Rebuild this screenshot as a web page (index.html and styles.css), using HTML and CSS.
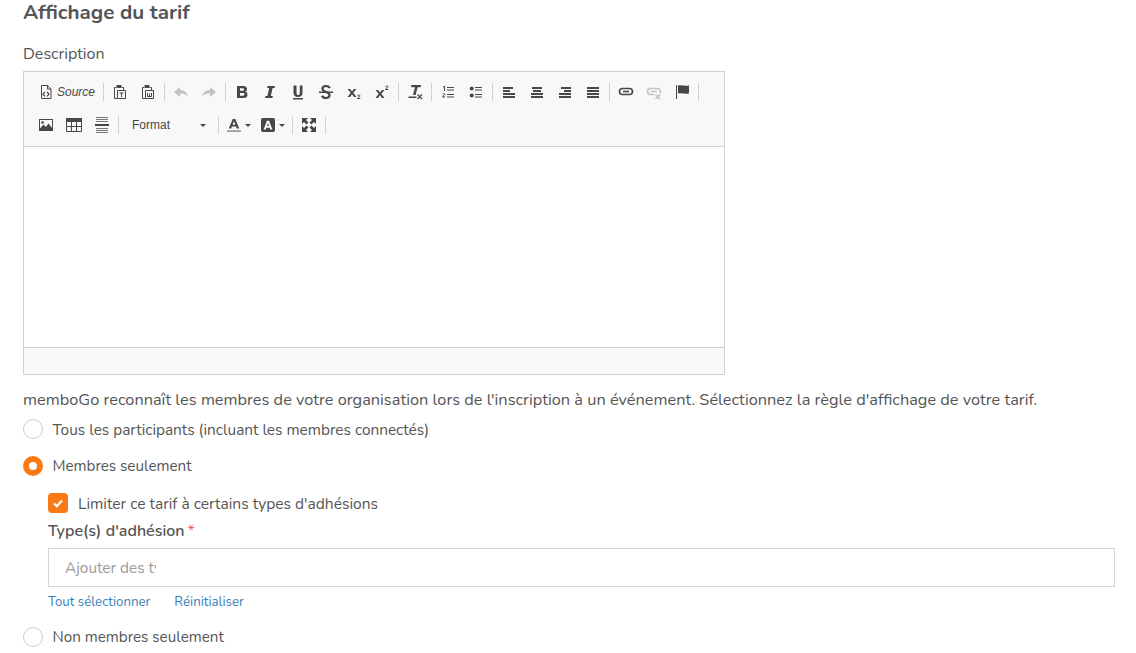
FILE: index.html
```html
<!DOCTYPE html>
<html lang="fr">
<head>
<meta charset="utf-8">
<title>Affichage du tarif</title>
<link rel="stylesheet" href="styles.css">
</head>
<body>
<main class="page">
  <h2 class="title">Affichage du tarif</h2>
  <div class="field-label">Description</div>
  <div class="editor">
    <div class="toolbar">
      <div class="row">
        <span class="btn btn-source">
          <svg class="ico" viewBox="0 0 16 16"><path class="ln" d="M3.500 1.500h6l3.500 3.500v9.500H3.500z"/><path class="ln" d="M9.500 1.500v3.500H13"/><path class="ln-s" d="M7 8l-2 2.200 2 2.200M9 8l2 2.200-2 2.200"/></svg>
          <span class="source-text">Source</span>
        </span>
        <i class="sep"></i>
        <span class="btn"><svg class="ico" viewBox="0 0 16 16"><path class="ln" d="M4 3.500H2.500v11H5M10 3.500h1.500V6"/><path class="fl" d="M4.500 1h5v3h-5z"/><path class="ln" d="M5.500 6.500h8v8h-8z"/><path class="ln" d="M7.500 9h4M9.500 9v4"/></svg></span>
        <span class="btn"><svg class="ico" viewBox="0 0 16 16"><path class="ln" d="M4 3.500H2.500v11H5M10 3.500h1.500V6"/><path class="fl" d="M4.500 1h5v3h-5z"/><path class="ln" d="M5.500 6.500h8v8h-8z"/><path class="ln" d="M7.500 9v3.500h4V9M9.500 9.500V12"/></svg></span>
        <i class="sep"></i>
        <span class="btn off"><svg class="ico" viewBox="0 0 16 16"><path class="fl" d="M1 8l6-5v3c4 0 7 2 8 7-2-3-4-3.500-8-3.500V13z"/></svg></span>
        <span class="btn off"><svg class="ico" viewBox="0 0 16 16"><path class="fl" d="M15 8L9 3v3c-4 0-7 2-8 7 2-3 4-3.500 8-3.500V13z"/></svg></span>
        <i class="sep"></i>
        <span class="btn"><svg class="ico" viewBox="0 0 16 16"><path class="fl" fill-rule="evenodd" d="M3 2h6c3 0 4 1.500 4 3.200 0 1.200-.6 2.200-1.800 2.600C12.800 8.200 13.500 9.300 13.500 10.700 13.500 13 12 14 9.500 14H3zM6 4.300v2.500h2.500c1 0 1.500-.5 1.500-1.300s-.5-1.200-1.500-1.200zM6 9v2.700h3c1 0 1.500-.5 1.500-1.400S10 9 9 9z"/></svg></span>
        <span class="btn"><svg class="ico" viewBox="0 0 16 16"><path class="fl" d="M5.500 2h7.500l-.4 2h-2L8.800 12h2l-.4 2H3l.4-2h2L7.200 4h-2z"/></svg></span>
        <span class="btn"><svg class="ico" viewBox="0 0 16 16"><path class="fl" d="M3 14h10v1.500H3zM3.500 1.500h3v7.200c0 1.700.6 2.300 1.600 2.300s1.700-.6 1.700-2.300V1.500h2.700v7.300c0 3-1.800 4.200-4.500 4.200S3.500 11.800 3.500 8.800z"/></svg></span>
        <span class="btn"><svg class="ico" viewBox="0 0 16 16"><path class="ln-b" d="M12 4c-1-1.500-2.500-2-4-2-2 0-3.500 1-3.500 2.800C4.500 9 11.500 7 11.500 11c0 1.800-1.500 3-3.500 3-1.800 0-3.200-.7-4.200-2.200"/><path class="fl" d="M1 7.500h14V9H1z"/></svg></span>
        <span class="btn"><svg class="ico" viewBox="0 0 16 16"><path class="fl" d="M1.500 5h2.600L6 7.500 7.900 5h2.600L7.300 8.800 10.500 13H7.900L6 10.300 4.100 13H1.500l3.200-4.200z"/><path class="ln-t2" d="M11.500 11.500c.3-.7 2.500-.7 2.500.4 0 1-2.500 1.300-2.500 2.600h2.800"/></svg></span>
        <span class="btn"><svg class="ico" viewBox="0 0 16 16"><path class="fl" d="M1.500 6h2.600L6 8.500 7.900 6h2.600L7.300 9.800 10.500 14H7.900L6 11.300 4.100 14H1.500l3.200-4.200z"/><path class="ln-t2" d="M11.500 2.500c.3-.7 2.500-.7 2.500.4 0 1-2.500 1.300-2.500 2.600h2.800"/></svg></span>
        <i class="sep"></i>
        <span class="btn"><svg class="ico" viewBox="0 0 16 16"><path class="fl" d="M4 1h10l-.4 2.200h-3L8.600 11h-2.600l2-7.800H4.500zM1.500 12.500h8V14h-8z"/><path class="ln-s" d="M10.500 10.500l4.500 4.500M15 10.500L10.500 15"/></svg></span>
        <i class="sep"></i>
        <span class="btn"><svg class="ico" viewBox="0 0 16 16"><path class="ln-t2" d="M3 3l1.500-.8V7M2.500 10c.3-.7 2.300-.7 2.300.4 0 1-2.300 1.300-2.300 2.600h2.600M7 3.500h7M7 6h7M7 10.500h7M7 13h7"/></svg></span>
        <span class="btn"><svg class="ico" viewBox="0 0 16 16"><circle class="fl" cx="3.700" cy="4.500" r="2"/><circle class="fl" cx="3.700" cy="11.500" r="2"/><path class="ln-t2" d="M7 3.500h7M7 6h7M7 10.500h7M7 13h7"/></svg></span>
        <i class="sep"></i>
        <span class="btn"><svg class="ico" viewBox="0 0 16 16"><path class="fl" d="M2 3h10v2H2zM2 6h7v2H2zM2 9h12v2H2zM2 12h12v2H2z"/></svg></span>
        <span class="btn"><svg class="ico" viewBox="0 0 16 16"><path class="fl" d="M3 3h10v2H3zM4 6h8v2H4zM2 9h12v2H2zM2 12h12v2H2z"/></svg></span>
        <span class="btn"><svg class="ico" viewBox="0 0 16 16"><path class="fl" d="M4 3h10v2H4zM7 6h7v2H7zM2 9h12v2H2zM2 12h12v2H2z"/></svg></span>
        <span class="btn"><svg class="ico" viewBox="0 0 16 16"><path class="fl" d="M2 3h12v2H2zM2 6h12v2H2zM2 9h12v2H2zM2 12h12v2H2z"/></svg></span>
        <i class="sep"></i>
        <span class="btn"><svg class="ico" viewBox="0 0 16 16"><rect class="ln-m" x="1.500" y="4.500" width="13" height="6" rx="3"/><path class="ln-m" d="M5 7.500h6"/></svg></span>
        <span class="btn off"><svg class="ico" viewBox="0 0 16 16"><path class="ln-m" d="M8 10.500H4.500a3 3 0 010-6h7a3 3 0 012.500 4.500M5 7.500h6"/><path class="ln-m" d="M9.500 10.500l4.500 4.500M14 10.500L9.500 15"/></svg></span>
        <span class="btn"><svg class="ico" viewBox="0 0 16 16"><path class="fl" d="M2 1h1v14H2zM4 1.500c4-.8 7 1 11 0v8c-4 1-7-.8-11 0z"/></svg></span>
        <i class="sep"></i>
      </div>
      <div class="row">
        <span class="btn"><svg class="ico" viewBox="0 0 16 16"><path class="fl" fill-rule="evenodd" d="M1 2h14v12H1zM2 3v8.500L5.500 7.500 8 10l2.500-3.500L14 11V3z"/><circle class="fl" cx="4.500" cy="5.500" r="1.300"/></svg></span>
        <span class="btn"><svg class="ico" viewBox="0 0 16 16"><path class="fl" d="M0 1h16v4H0z"/><path class="ln" d="M.5 4.500h15v10H.5zM5.500 4.500v10M10.500 4.500v10M.5 9.500h15"/></svg></span>
        <span class="btn"><svg class="ico" viewBox="0 0 16 16"><path class="ln-t" d="M2 .5h12M2 2.500h12M2 4.500h12M2 11.500h12M2 13.500h12M2 15.500h12"/><path class="fl" d="M1 7h14v2H1z"/></svg></span>
        <i class="sep"></i>
        <span class="combo"><span class="combo-text">Format</span><i class="caret"></i></span>
        <i class="sep"></i>
        <span class="btn btn-color">
          <svg class="ico-color" viewBox="0 0 16 16"><path class="fl" d="M6.500 1h3L14 12h-2.800l-.8-2.200H5.600L4.800 12H2zM6.400 7.800h3.200L8 3.500z"/><path class="bar" d="M0 14h16v2H0z"/></svg>
          <i class="caret"></i>
        </span>
        <span class="btn btn-color btn-bg">
          <svg class="ico-color" viewBox="0 0 16 16"><path class="fl" fill-rule="evenodd" d="M2 0h12a2 2 0 012 2v12a2 2 0 01-2 2H2a2 2 0 01-2-2V2a2 2 0 012-2zM6.800 3L3 13h2.500l.7-2h3.600l.7 2H13L9.200 3zM6.900 9L8 5.700 9.100 9z"/></svg>
          <i class="caret"></i>
        </span>
        <i class="sep"></i>
        <span class="btn"><svg class="ico" viewBox="0 0 16 16"><path class="fl" d="M1 1h6L5 3l2.500 2.500-2 2L3 5 1 7zM15 1v6l-2-2-2.500 2.500-2-2L11 3 9 1zM1 15V9l2 2 2.500-2.500 2 2L5 13l2 2zM15 15H9l2-2-2.500-2.500 2-2L13 11l2-2z"/></svg></span>
        <i class="sep"></i>
      </div>
    </div>
    <div class="content"></div>
    <div class="statusbar"></div>
  </div>
  <p class="intro">memboGo reconnaît les membres de votre organisation lors de l'inscription à un événement. Sélectionnez la règle d'affichage de votre tarif.</p>
  <div class="option"><span class="radio"></span><span>Tous les participants (incluant les membres connectés)</span></div>
  <div class="option option-short"><span class="radio radio-on"></span><span>Membres seulement</span></div>
  <div class="nested">
    <div class="check-row">
      <span class="checkbox"><svg class="check" viewBox="0 0 12 12"><path d="M2 6.500l2.800 2.700L10 3.500"/></svg></span>
      <span>Limiter ce tarif à certains types d'adhésions</span>
    </div>
    <div class="type-label">Type(s) d'adhésion<span class="req">*</span></div>
    <div class="input-box"><span class="placeholder">Ajouter des types</span></div>
    <div class="links"><a href="#">Tout sélectionner</a><a href="#">Réinitialiser</a></div>
  </div>
  <div class="option option-last option-short"><span class="radio"></span><span>Non membres seulement</span></div>
</main>
</body>
</html>
```
FILE: styles.css
```css
* { box-sizing: border-box; }
html, body { margin: 0; padding: 0; overflow: hidden; background: #fff; }
body { font-family: "Nunito", "Lato", "Noto Sans", sans-serif; color: #555; font-size: 15.4px; height: 653px; }
.page { padding: 0 21px 0 23px; }
.title { margin: 0; font-size: 20.6px; line-height: 24px; font-weight: 700; color: #555; }
.field-label { margin-top: 20px; line-height: 20px; height: 20px; font-size: 16px; }
.editor { width: 702px; height: 304px; margin-top: 7px; border: 1px solid #d1d1d1; display: flex; flex-direction: column; }
.toolbar { background: #f8f8f8; border-bottom: 1px solid #d1d1d1; padding: 4px 0 5px 8px; height: 75px; flex: none; }
.content { flex: 1; background: #fff; }
.statusbar { height: 27px; flex: none; background: #f8f8f8; border-top: 1px solid #d1d1d1; }
.row { display: flex; align-items: center; height: 32px; }
.row + .row { margin-top: 1px; }
.btn { width: 28px; height: 32px; display: flex; align-items: center; justify-content: center; flex: none; }
.btn-source { width: 69px; justify-content: flex-start; padding-left: 6px; }
.source-text { font: italic 12px/16px "Liberation Sans", sans-serif; color: #474747; margin-left: 3px; }
.ico { width: 16px; height: 16px; display: block; flex: none; }
.ico-color { width: 14px; height: 14px; display: block; flex: none; }
.fl { fill: #474747; }
.ln, .ln-b, .ln-s, .ln-m, .ln-t, .ln-t2 { fill: none; stroke: #474747; }
.ln { stroke-width: 1; }
.ln-b { stroke-width: 2.2; }
.ln-s { stroke-width: 1.2; }
.ln-m { stroke-width: 1.6; }
.ln-t { stroke: #777; stroke-width: 1; }
.ln-t2 { stroke-width: 1; }
.bar { fill: #9a9a9a; }
.off { opacity: .3; }
.sep { display: block; width: 1px; height: 18px; background: #d1d1d1; margin: 0 2px; flex: none; }
.combo { width: 95px; height: 32px; display: flex; align-items: center; justify-content: space-between; padding: 0 10px 0 11px; flex: none; }
.combo-text { font: 12px/16px "Liberation Sans", sans-serif; color: #484848; }
.caret { display: block; width: 0; height: 0; border: 3px solid transparent; border-top-color: #474747; border-bottom: 0; flex: none; }
.btn-color { width: 32px; justify-content: flex-start; padding-left: 6px; gap: 4px; }
.btn-bg { width: 37px; padding-left: 8px; }
.intro { margin: 15px 0 0; line-height: 20px; height: 20px; white-space: nowrap; font-size: 16.35px; }
.option { display: flex; align-items: center; height: 20px; margin-top: 17px; gap: 9.5px; }
.intro + .option { margin-top: 9px; }
.option-short { font-size: 15.2px; }
.option-last { margin-top: 0; }
.radio { width: 20px; height: 20px; border: 1px solid #c5ccd6; border-radius: 50%; background: #fff; flex: none; }
.radio-on { border: 6px solid #f97a14; }
.nested { padding-left: 25px; margin-top: 17px; }
.check-row { display: flex; align-items: center; gap: 10px; height: 20px; font-size: 15.55px; }
.checkbox { width: 20px; height: 20px; background: #f97a14; border-radius: 4px; display: flex; align-items: center; justify-content: center; flex: none; }
.check { width: 12px; height: 12px; }
.check path { fill: none; stroke: #fff; stroke-width: 2.2; }
.type-label { margin-top: 8px; line-height: 20px; font-weight: 600; font-size: 16px; }
.req { color: #f0695f; margin-left: 3px; font-weight: 400; }
.input-box { height: 39px; margin-top: 7px; border: 1px solid #ced6e0; padding-left: 16px; display: flex; align-items: center; }
.placeholder { width: 91px; overflow: hidden; white-space: nowrap; color: #9a9a9a; }
.links { display: flex; gap: 24px; margin-top: 7px; height: 16px; line-height: 16px; margin-bottom: 17px; font-size: 13.25px; }
.links a { color: #3b7fb8; text-decoration: none; }
```
